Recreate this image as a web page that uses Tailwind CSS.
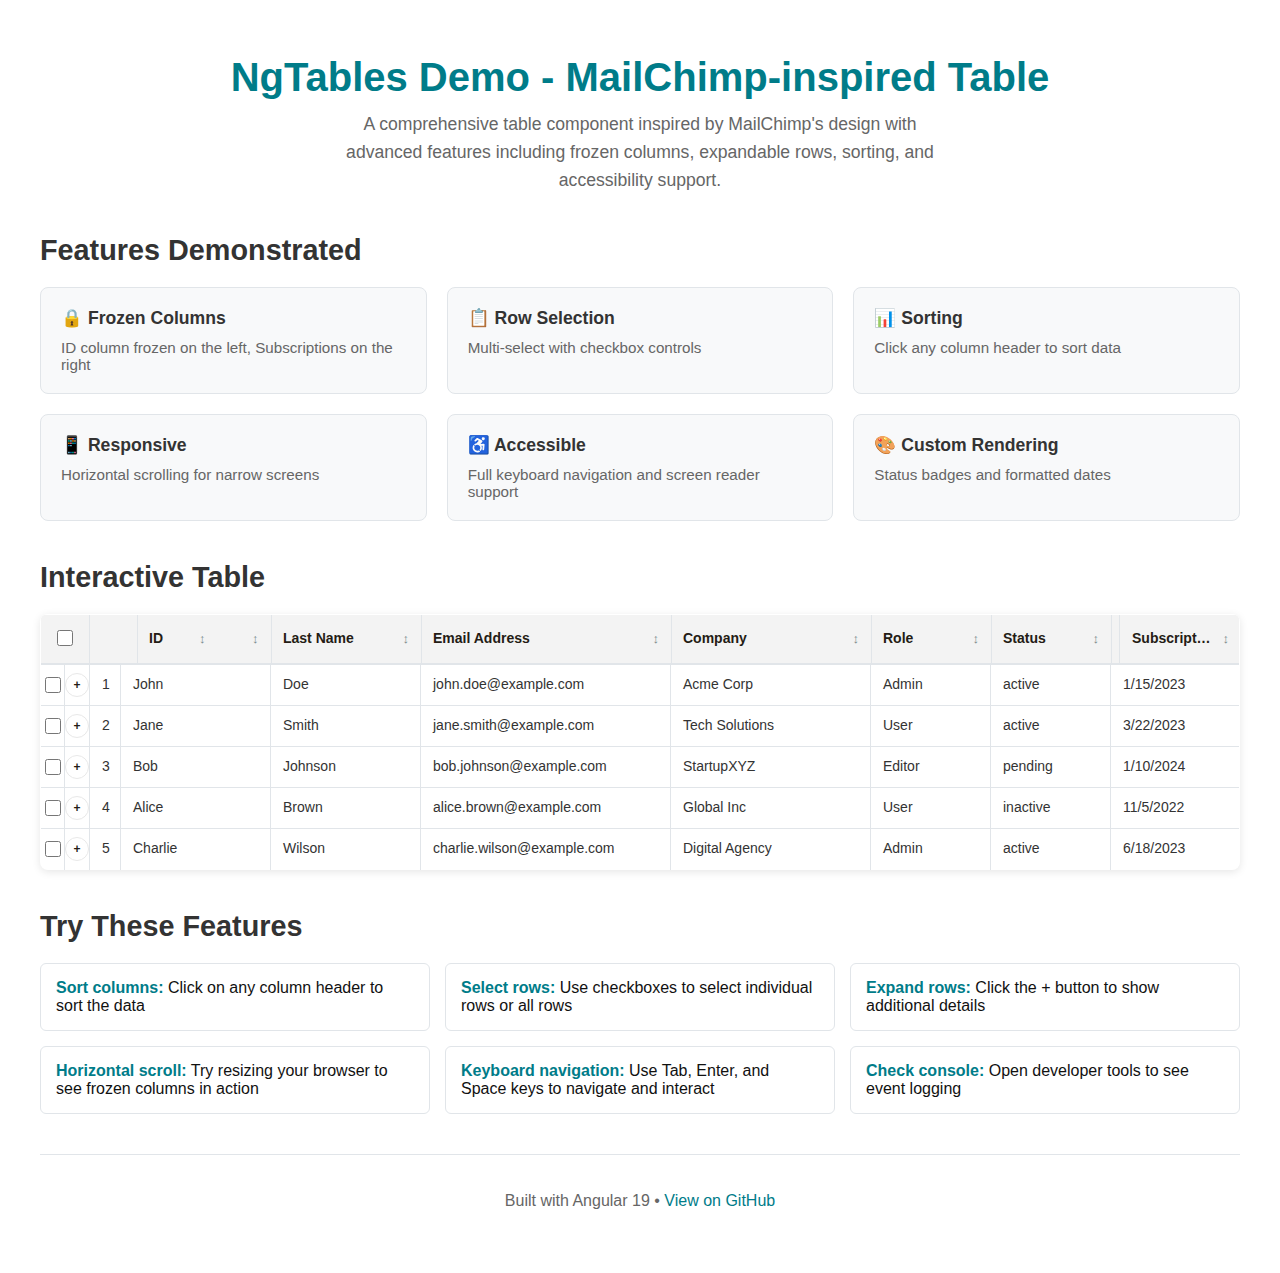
<!DOCTYPE html>
<html lang="en">
<head>
<meta charset="UTF-8">
<title>NgTables Demo</title>
<script src="https://cdn.jsdelivr.net/npm/@tailwindcss/browser@4"></script>
</head>
<body class="bg-white text-[#333] font-['Liberation_Sans',Arial,sans-serif]">
<div class="px-10 pt-10 pb-[40px]">
  <header class="text-center mb-10">
    <h1 class="text-[40px] leading-[46px] font-bold text-[#007c89] mb-[10px] mt-[14px]">NgTables Demo - MailChimp-inspired Table</h1>
    <p class="text-[17.6px] leading-7 text-[#666] w-[600px] mx-auto">A comprehensive table component inspired by MailChimp's design with advanced features including frozen columns, expandable rows, sorting, and accessibility support.</p>
  </header>

  <h2 class="text-[28.8px] leading-[33px] font-bold mb-5">Features Demonstrated</h2>
  <div class="grid grid-cols-3 gap-5 mb-10">
    <div class="h-[107px] bg-[#f8f9fa] border border-[#e1e5e9] rounded-lg p-5">
      <h3 class="text-[17.6px] leading-[20px] font-bold mb-[11px]">🔒 Frozen Columns</h3>
      <p class="text-[15.2px] leading-[17px] text-[#666]">ID column frozen on the left, Subscriptions on the right</p>
    </div>
    <div class="h-[107px] bg-[#f8f9fa] border border-[#e1e5e9] rounded-lg p-5">
      <h3 class="text-[17.6px] leading-[20px] font-bold mb-[11px]">📋 Row Selection</h3>
      <p class="text-[15.2px] leading-[17px] text-[#666]">Multi-select with checkbox controls</p>
    </div>
    <div class="h-[107px] bg-[#f8f9fa] border border-[#e1e5e9] rounded-lg p-5">
      <h3 class="text-[17.6px] leading-[20px] font-bold mb-[11px]">📊 Sorting</h3>
      <p class="text-[15.2px] leading-[17px] text-[#666]">Click any column header to sort data</p>
    </div>
    <div class="h-[107px] bg-[#f8f9fa] border border-[#e1e5e9] rounded-lg p-5">
      <h3 class="text-[17.6px] leading-[20px] font-bold mb-[11px]">📱 Responsive</h3>
      <p class="text-[15.2px] leading-[17px] text-[#666]">Horizontal scrolling for narrow screens</p>
    </div>
    <div class="h-[107px] bg-[#f8f9fa] border border-[#e1e5e9] rounded-lg p-5">
      <h3 class="text-[17.6px] leading-[20px] font-bold mb-[11px]">♿ Accessible</h3>
      <p class="text-[15.2px] leading-[17px] text-[#666]">Full keyboard navigation and screen reader support</p>
    </div>
    <div class="h-[107px] bg-[#f8f9fa] border border-[#e1e5e9] rounded-lg p-5">
      <h3 class="text-[17.6px] leading-[20px] font-bold mb-[11px]">🎨 Custom Rendering</h3>
      <p class="text-[15.2px] leading-[17px] text-[#666]">Status badges and formatted dates</p>
    </div>
  </div>

  <h2 class="text-[28.8px] leading-[33px] font-bold mb-5">Interactive Table</h2>
  <div class="rounded-lg overflow-hidden shadow-[0_2px_8px_rgba(0,0,0,0.1)] mb-10 text-sm text-[#333] px-px pt-px">
    <!-- header -->
    <div class="flex h-[50px] bg-[#f3f3f3] border-b-2 border-[#e1e5e9] font-bold text-[#241c15] [&>div]:pb-[2px]">
      <div class="w-[49px] flex items-center justify-center border-r border-[#e1e5e9]"><input type="checkbox" class="appearance-none w-4 h-4 bg-white border border-[#767676] rounded-[2.5px]"></div>
      <div class="w-[48px] border-r border-[#e1e5e9]"></div>
      <div class="w-[134px] flex items-center pl-[11px] pr-3 border-r border-[#e1e5e9]"><span class="w-[50px]">ID</span><span class="text-[13px] text-[#7b8b8d] mt-[2px] w-[53px]">↕</span><span class="text-[13px] text-[#7b8b8d] mt-[2px]">↕</span></div>
      <div class="w-[150px] flex items-center justify-between pl-[11px] pr-3 border-r border-[#e1e5e9]"><span>Last Name</span><span class="text-[13px] text-[#7b8b8d] mt-[2px]">↕</span></div>
      <div class="w-[250px] flex items-center justify-between pl-[11px] pr-3 border-r border-[#e1e5e9]"><span>Email Address</span><span class="text-[13px] text-[#7b8b8d] mt-[2px]">↕</span></div>
      <div class="w-[200px] flex items-center justify-between pl-[11px] pr-3 border-r border-[#e1e5e9]"><span>Company</span><span class="text-[13px] text-[#7b8b8d] mt-[2px]">↕</span></div>
      <div class="w-[120px] flex items-center justify-between pl-[11px] pr-3 border-r border-[#e1e5e9]"><span>Role</span><span class="text-[13px] text-[#7b8b8d] mt-[2px]">↕</span></div>
      <div class="w-[120px] flex items-center justify-between pl-[11px] pr-3 border-r border-[#e1e5e9]"><span>Status</span><span class="text-[13px] text-[#7b8b8d] mt-[2px]">↕</span></div>
      <div class="w-[8px] border-r border-[#e1e5e9]"></div>
      <div class="flex-1 flex items-center justify-between pl-3 pr-[10px] min-w-0"><span class="w-[79px] truncate">Subscriptions</span><span class="text-[13px] text-[#7b8b8d] mt-[2px]">↕</span></div>
    </div>
    <!-- rows -->
    <div class="flex h-[41px] items-stretch border-b border-[#e1e5e9] [&>div:nth-child(n+3)]:pb-[2px]">
      <div class="w-[24px] flex items-center justify-center border-r border-[#e1e5e9]"><input type="checkbox" class="appearance-none w-4 h-4 bg-white border border-[#767676] rounded-[2.5px]"></div>
      <div class="w-[25px] flex items-center justify-center border-r border-[#e1e5e9]"><span class="w-6 h-6 rounded-full border border-[#e8e8e8] flex items-center justify-center text-xs font-bold text-[#241c15]">+</span></div>
      <div class="w-[31px] flex items-center justify-center pl-[2px] border-r border-[#e1e5e9]">1</div>
      <div class="w-[150px] flex items-center px-3 border-r border-[#e1e5e9]">John</div>
      <div class="w-[150px] flex items-center px-3 border-r border-[#e1e5e9]">Doe</div>
      <div class="w-[250px] flex items-center px-3 border-r border-[#e1e5e9]">john.doe@example.com</div>
      <div class="w-[200px] flex items-center px-3 border-r border-[#e1e5e9]">Acme Corp</div>
      <div class="w-[120px] flex items-center px-3 border-r border-[#e1e5e9]">Admin</div>
      <div class="w-[120px] flex items-center px-3 border-r border-[#e1e5e9]">active</div>
      <div class="flex-1 flex items-center px-3">1/15/2023</div>
    </div>
    <div class="flex h-[41px] items-stretch border-b border-[#e1e5e9] [&>div:nth-child(n+3)]:pb-[2px]">
      <div class="w-[24px] flex items-center justify-center border-r border-[#e1e5e9]"><input type="checkbox" class="appearance-none w-4 h-4 bg-white border border-[#767676] rounded-[2.5px]"></div>
      <div class="w-[25px] flex items-center justify-center border-r border-[#e1e5e9]"><span class="w-6 h-6 rounded-full border border-[#e8e8e8] flex items-center justify-center text-xs font-bold text-[#241c15]">+</span></div>
      <div class="w-[31px] flex items-center justify-center pl-[2px] border-r border-[#e1e5e9]">2</div>
      <div class="w-[150px] flex items-center px-3 border-r border-[#e1e5e9]">Jane</div>
      <div class="w-[150px] flex items-center px-3 border-r border-[#e1e5e9]">Smith</div>
      <div class="w-[250px] flex items-center px-3 border-r border-[#e1e5e9]">jane.smith@example.com</div>
      <div class="w-[200px] flex items-center px-3 border-r border-[#e1e5e9]">Tech Solutions</div>
      <div class="w-[120px] flex items-center px-3 border-r border-[#e1e5e9]">User</div>
      <div class="w-[120px] flex items-center px-3 border-r border-[#e1e5e9]">active</div>
      <div class="flex-1 flex items-center px-3">3/22/2023</div>
    </div>
    <div class="flex h-[41px] items-stretch border-b border-[#e1e5e9] [&>div:nth-child(n+3)]:pb-[2px]">
      <div class="w-[24px] flex items-center justify-center border-r border-[#e1e5e9]"><input type="checkbox" class="appearance-none w-4 h-4 bg-white border border-[#767676] rounded-[2.5px]"></div>
      <div class="w-[25px] flex items-center justify-center border-r border-[#e1e5e9]"><span class="w-6 h-6 rounded-full border border-[#e8e8e8] flex items-center justify-center text-xs font-bold text-[#241c15]">+</span></div>
      <div class="w-[31px] flex items-center justify-center pl-[2px] border-r border-[#e1e5e9]">3</div>
      <div class="w-[150px] flex items-center px-3 border-r border-[#e1e5e9]">Bob</div>
      <div class="w-[150px] flex items-center px-3 border-r border-[#e1e5e9]">Johnson</div>
      <div class="w-[250px] flex items-center px-3 border-r border-[#e1e5e9]">bob.johnson@example.com</div>
      <div class="w-[200px] flex items-center px-3 border-r border-[#e1e5e9]">StartupXYZ</div>
      <div class="w-[120px] flex items-center px-3 border-r border-[#e1e5e9]">Editor</div>
      <div class="w-[120px] flex items-center px-3 border-r border-[#e1e5e9]">pending</div>
      <div class="flex-1 flex items-center px-3">1/10/2024</div>
    </div>
    <div class="flex h-[41px] items-stretch border-b border-[#e1e5e9] [&>div:nth-child(n+3)]:pb-[2px]">
      <div class="w-[24px] flex items-center justify-center border-r border-[#e1e5e9]"><input type="checkbox" class="appearance-none w-4 h-4 bg-white border border-[#767676] rounded-[2.5px]"></div>
      <div class="w-[25px] flex items-center justify-center border-r border-[#e1e5e9]"><span class="w-6 h-6 rounded-full border border-[#e8e8e8] flex items-center justify-center text-xs font-bold text-[#241c15]">+</span></div>
      <div class="w-[31px] flex items-center justify-center pl-[2px] border-r border-[#e1e5e9]">4</div>
      <div class="w-[150px] flex items-center px-3 border-r border-[#e1e5e9]">Alice</div>
      <div class="w-[150px] flex items-center px-3 border-r border-[#e1e5e9]">Brown</div>
      <div class="w-[250px] flex items-center px-3 border-r border-[#e1e5e9]">alice.brown@example.com</div>
      <div class="w-[200px] flex items-center px-3 border-r border-[#e1e5e9]">Global Inc</div>
      <div class="w-[120px] flex items-center px-3 border-r border-[#e1e5e9]">User</div>
      <div class="w-[120px] flex items-center px-3 border-r border-[#e1e5e9]">inactive</div>
      <div class="flex-1 flex items-center px-3">11/5/2022</div>
    </div>
    <div class="flex h-[41px] items-stretch [&>div:nth-child(n+3)]:pb-[3px] [&>div:nth-child(-n+2)]:pb-px">
      <div class="w-[24px] flex items-center justify-center border-r border-[#e1e5e9]"><input type="checkbox" class="appearance-none w-4 h-4 bg-white border border-[#767676] rounded-[2.5px]"></div>
      <div class="w-[25px] flex items-center justify-center border-r border-[#e1e5e9]"><span class="w-6 h-6 rounded-full border border-[#e8e8e8] flex items-center justify-center text-xs font-bold text-[#241c15]">+</span></div>
      <div class="w-[31px] flex items-center justify-center pl-[2px] border-r border-[#e1e5e9]">5</div>
      <div class="w-[150px] flex items-center px-3 border-r border-[#e1e5e9]">Charlie</div>
      <div class="w-[150px] flex items-center px-3 border-r border-[#e1e5e9]">Wilson</div>
      <div class="w-[250px] flex items-center px-3 border-r border-[#e1e5e9]">charlie.wilson@example.com</div>
      <div class="w-[200px] flex items-center px-3 border-r border-[#e1e5e9]">Digital Agency</div>
      <div class="w-[120px] flex items-center px-3 border-r border-[#e1e5e9]">Admin</div>
      <div class="w-[120px] flex items-center px-3 border-r border-[#e1e5e9]">active</div>
      <div class="flex-1 flex items-center px-3">6/18/2023</div>
    </div>
  </div>

  <h2 class="text-[28.8px] leading-[33px] font-bold mb-5">Try These Features</h2>
  <div class="grid grid-cols-3 gap-[15px] mb-10 text-base leading-[18px] text-[#111]">
    <div class="bg-white border border-[#e1e5e9] rounded-md p-[15px]"><strong class="text-[#007c89]">Sort columns:</strong> Click on any column header to sort the data</div>
    <div class="bg-white border border-[#e1e5e9] rounded-md p-[15px]"><strong class="text-[#007c89]">Select rows:</strong> Use checkboxes to select individual rows or all rows</div>
    <div class="bg-white border border-[#e1e5e9] rounded-md p-[15px]"><strong class="text-[#007c89]">Expand rows:</strong> Click the + button to show additional details</div>
    <div class="bg-white border border-[#e1e5e9] rounded-md p-[15px]"><strong class="text-[#007c89]">Horizontal scroll:</strong> Try resizing your browser to see frozen columns in action</div>
    <div class="bg-white border border-[#e1e5e9] rounded-md p-[15px]"><strong class="text-[#007c89]">Keyboard navigation:</strong> Use Tab, Enter, and Space keys to navigate and interact</div>
    <div class="bg-white border border-[#e1e5e9] rounded-md p-[15px]"><strong class="text-[#007c89]">Check console:</strong> Open developer tools to see event logging</div>
  </div>

  <footer class="border-t border-[#e1e5e9] pt-[37px] text-center text-base leading-[18px] text-[#666]">Built with Angular 19 • <a href="#" class="text-[#007c89]">View on GitHub</a></footer>
</div>
</body>
</html>
